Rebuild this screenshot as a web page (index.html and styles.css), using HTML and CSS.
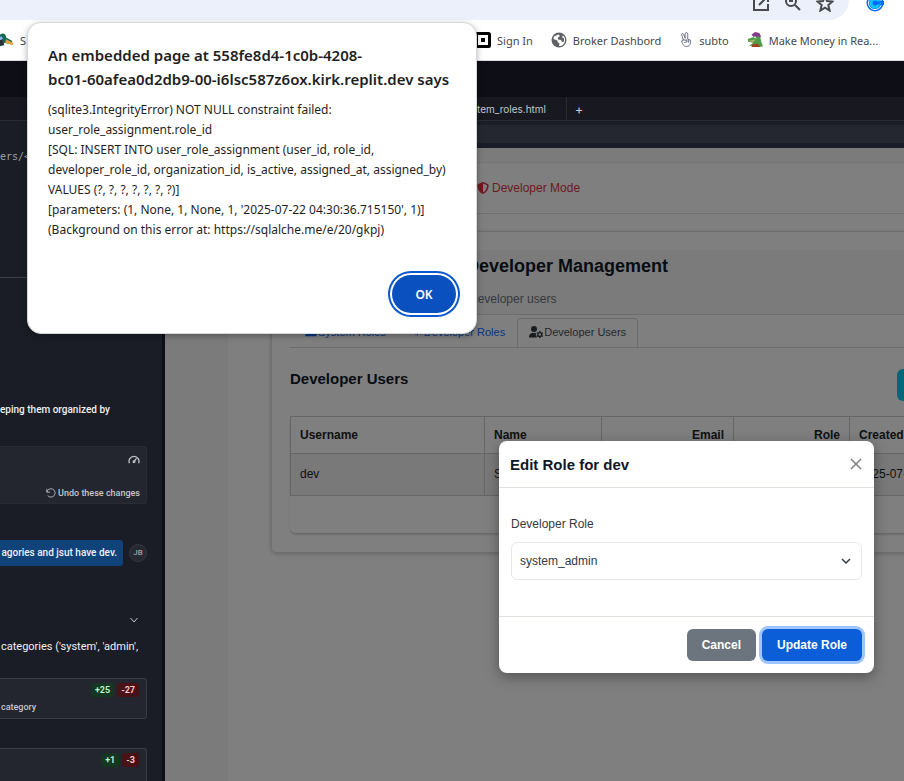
FILE: index.html
```html
<!DOCTYPE html>
<html lang="en">
<head>
<meta charset="utf-8">
<meta name="viewport" content="width=device-width, initial-scale=1">
<title>Developer Management</title>
<link rel="stylesheet" href="styles.css">
</head>
<body>
<header class="browser">
  <div class="omnibar">
    <div class="address">
      <svg viewBox="0 0 18 18" width="18" height="18" fill="none" stroke="#47494d" stroke-width="2"><path d="M8 2H2v14h14v-6M10 2h6v6M16 2 7 11"/></svg>
      <svg viewBox="0 0 18 18" width="18" height="18" fill="none" stroke="#47494d" stroke-width="2"><circle cx="7" cy="7" r="5"/><path d="m11 11 5 5M5 7h4"/></svg>
      <svg viewBox="0 0 18 18" width="18" height="18" fill="none" stroke="#47494d" stroke-width="2"><path d="m9 2 2 5 5.500.5-4.200 3.600 1.300 5.400L9 13.600l-4.600 2.900 1.300-5.400L1.500 7.500 7 7z"/></svg>
    </div>
    <svg class="extension" viewBox="0 0 18 18" width="18" height="18"><circle cx="9" cy="9" r="8.500" fill="#006bff"/><circle cx="9" cy="9" r="6.500" fill="none" stroke="#fff" stroke-width="1"/><path d="M18 7h-5v4h5z" fill="#006bff"/><circle cx="9" cy="9" r="4" fill="none" stroke="#0cc5f5" stroke-width="3"/><path d="M10 7.500h4v3h-4z" fill="#006bff"/></svg>
  </div>
  <nav class="bookmarks">
    <a class="bookmark first" href="#"><svg viewBox="0 0 16 16" width="14" height="16"><path d="M0 2c3-3 7-1 7 3l7 4-1 4-8-2c-1 4-5 4-5 4z" fill="#12694f"/><path d="m7 7 8 4v3L6 11z" fill="#e3a13b"/><path d="M0 5h3v5l2 4H0z" fill="#312b38"/><circle cx="1" cy="6" r="2" fill="#86b6ee"/></svg>S</a>
    <a class="bookmark" href="#"><svg viewBox="0 0 16 16" width="16" height="16"><rect x="1.500" y="1.500" width="13" height="13" rx="1" fill="#fff" stroke="#000" stroke-width="3"/><path d="M6 6h4v4H6z"/></svg>Sign In</a>
    <a class="bookmark" href="#"><svg viewBox="0 0 16 16" width="16" height="16"><circle cx="8" cy="8" r="7.500" fill="#5f6368"/><path d="M3 4.500 7.500 2.500 9 4 7 5.500v2l3 .5 1 2 2-.5v-3l-2-1.500 1-1.500a6 6 0 0 1-4 10.500l.500-2.500-2-1.500V8.500L2.500 7z" fill="#fff"/></svg>Broker Dashbord</a>
    <a class="bookmark" href="#"><svg viewBox="0 0 16 18" width="14" height="18" fill="#fff" stroke="#57617a"><path d="M5 9 3 3c0-2 2-2 2.500 0L7 7V2c0-2 3-2 3 0v6l3 1v4c-1 4-7 5-9 0l-1-3z"/><path d="M4 9h4l1 2-3 1M9 8v3m2-2v3"/></svg>subto</a>
    <a class="bookmark" href="#"><svg viewBox="0 0 18 18" width="16" height="16"><path d="m1 8 6-2 3-3 5 3 1 5 2 5-4 1-6-2-6 1 5-4-6-1z" fill="#4f9d4b"/><path d="m5 3 4-3 5 1 2 5-5-1-3 1z" fill="#843c8b"/><path d="m6 14 6-1 3 4H5z" fill="#a5431d"/><path d="m1 10 7-1 3-2-4 4z" fill="#d9bf68"/><circle cx="9" cy="6" r="1" fill="#fff"/></svg>Make Money in Rea...</a>
  </nav>
</header>
<div class="workspace-head"></div>
<nav class="file-tabs"><a class="file-tab" href="#">tem_roles.html</a><button class="add-tab" aria-label="New tab">+</button></nav>
<div class="workspace">
  <aside class="agent">
    <section class="agent-code"><code>ers/&lt;</code></section>
    <p class="agent-text summary">eping them organized by</p>
    <section class="checkpoint">
      <svg viewBox="0 0 14 12" width="12" height="10" fill="none" stroke="#c2c8cc" stroke-width="1.500"><path d="M1.500 10a6 6 0 1 1 11 0M7 8l3-4"/><circle cx="7" cy="8" r="1"/></svg>
      <button class="undo"><svg viewBox="0 0 12 12" width="10" height="10" fill="none" stroke="#c2c8cc"><path d="M1 1v4h4M1 5a5 5 0 1 1 1 4"/></svg>Undo these changes</button>
    </section>
    <div class="message"><p class="bubble">agories and jsut have dev.</p><span class="avatar">JB</span></div>
    <button class="collapse" aria-label="Collapse"><svg viewBox="0 0 10 10" width="10" height="10" fill="none" stroke="#c2c8cc"><path d="m1.500 3 3.500 4 3.500-4"/></svg></button>
    <p class="agent-text categories">categories ('system', 'admin',</p>
    <section class="change"><div class="counts"><span class="plus">+25</span><span class="minus">-27</span></div><p>category</p></section>
    <section class="change"><div class="counts"><span class="plus">+1</span><span class="minus">-3</span></div></section>
  </aside>
  <div class="divider"></div>
  <section class="webview">
    <div class="toolbar"></div>
    <div class="preview">
      <div class="app">
        <div class="app-top"></div>
        <div class="mode"><svg viewBox="0 0 512 512" width="12" height="12" fill="#dc3545"><path d="M256 0c4.600 0 9.200 1 13.400 2.900L457.700 82.800c22 9.300 38.400 31 38.300 57.200c-.5 99.200-41.300 280.700-213.600 363.200c-16.700 8-36.100 8-52.800 0C57.300 420.700 16.500 239.200 16 140c-.1-26.200 16.300-47.900 38.300-57.200L242.700 2.900C246.800 1 251.400 0 256 0zm0 66.800V444.800C394 378 431.100 230.100 432 141.400L256 66.800z"/></svg>Developer Mode</div>
        <div class="app-body">
          <div class="sidebar"></div>
          <main class="card">
            <div class="card-head"><h1>Developer Management</h1><p>developer users</p></div>
            <div class="card-body">
              <nav class="tabs">
                <a class="tab" href="#"><svg viewBox="0 0 14 12" width="12" height="12" fill="#0d6efd"><circle cx="5" cy="3" r="3"/><path d="M0 11c0-5 9-5 10 0z"/><circle cx="11" cy="8" r="3"/></svg>System Roles</a>
                <a class="tab" href="#"><svg viewBox="0 0 12 12" width="10" height="10" fill="none" stroke="#0d6efd" stroke-width="1.500"><path d="M3 3 1 6l2 3M9 3l2 3-2 3M7 2 5 10"/></svg>Developer Roles</a>
                <a class="tab active" href="#"><svg viewBox="0 0 14 12" width="14" height="12" fill="#343a40"><circle cx="5" cy="3" r="3"/><path d="M0 11.500C0 8 2 7 4 7h3a4 4 0 0 0 1 4.500z"/><circle cx="10.800" cy="8.500" r="1.900" fill="none" stroke="#343a40" stroke-width="1.400"/><path d="M10 5h1.600v1.500H10zM10 10.500h1.600V12H10zM7.300 7l1-.9 1 .9-.8 1zM14.300 7l-1-.9-1 .9.8 1zM7.300 10l1 .9 1-.9-.8-1zM14.300 10l-1 .9-1-.9.8-1z"/></svg>Developer Users</a>
              </nav>
              <div class="section-head"><h2>Developer Users</h2><button class="create" aria-label="Add user"></button></div>
              <div class="table-wrap">
                <table>
                  <colgroup><col class="c-user"><col class="c-name"><col class="c-email"><col class="c-role"><col></colgroup>
                  <thead><tr><th>Username</th><th>Name</th><th class="end">Email</th><th class="end">Role</th><th>Created</th></tr></thead>
                  <tbody><tr><td>dev</td><td>S</td><td></td><td></td><td>2025-07-</td></tr></tbody>
                </table>
              </div>
            </div>
          </main>
        </div>
      </div>
      <div class="backdrop"></div>
    </div>
  </section>
</div>
<form class="modal" role="dialog" aria-labelledby="modal-title">
  <header class="modal-head"><h2 id="modal-title">Edit Role for dev</h2><button class="close" type="button" aria-label="Close"><svg viewBox="0 0 12 12" width="12" height="12" stroke="#7f7f7f" stroke-width="1.500"><path d="m1 1 10 10M11 1 1 11"/></svg></button></header>
  <div class="modal-body">
    <label for="role">Developer Role</label>
    <div class="select"><select id="role"><option>system_admin</option></select><svg viewBox="0 0 10 10" width="10" height="10" fill="none" stroke="#343a40" stroke-width="1.500"><path d="m1 3 4 4 4-4"/></svg></div>
  </div>
  <footer class="modal-foot"><button class="btn" type="button">Cancel</button><button class="btn primary" type="button">Update Role</button></footer>
</form>
<section class="alert" role="alertdialog" aria-labelledby="alert-title">
  <h2 id="alert-title">An embedded page at 558fe8d4-1c0b-4208-<br>bc01-60afea0d2db9-00-i6lsc587z6ox.kirk.replit.dev says</h2>
  <p>(sqlite3.IntegrityError) NOT NULL constraint failed:<br>user_role_assignment.role_id<br>[SQL: INSERT INTO user_role_assignment (user_id, role_id,<br>developer_role_id, organization_id, is_active, assigned_at, assigned_by)<br>VALUES (?, ?, ?, ?, ?, ?, ?)]<br>[parameters: (1, None, 1, None, 1, '2025-07-22 04:30:36.715150', 1)]<br>(Background on this error at: https://sqlalche.me/e/20/gkpj)</p>
  <button class="ok">OK</button>
</section>
</body>
</html>
```
FILE: styles.css
```css
* { box-sizing: border-box; }
body {
  margin: 0;
  height: 100vh;
  display: flex;
  flex-direction: column;
  position: relative;
  overflow: hidden;
  background: #1b1d26;
  font-family: "Liberation Sans", Arial, sans-serif;
  font-size: 12px;
}
h1, h2, p { margin: 0; }
a { color: inherit; text-decoration: none; }
button { border: 0; padding: 0; font: inherit; color: inherit; background: none; }
svg { flex: none; display: block; }

/* Browser bars */
.browser { background: #fff; border-bottom: 1px solid #dcdcdc; }
.omnibar { height: 20px; display: flex; overflow: hidden; }
.address {
  flex: 1;
  display: flex;
  justify-content: flex-end;
  gap: 14px;
  padding-right: 15px;
  background: #ebf0fa;
  border-bottom-right-radius: 20px;
}
.address svg, .extension { margin-top: -6px; }
.extension { margin-left: 17px; margin-right: 20px; }
.bookmarks {
  height: 40px;
  display: flex;
  align-items: center;
  gap: 18px;
  font-family: "Noto Sans", "Open Sans", sans-serif;
  font-size: 11px;
  color: #474747;
  white-space: nowrap;
}
.bookmark { display: flex; align-items: center; gap: 6px; }
.bookmark.first { width: 457px; }

/* Workspace */
.workspace-head { flex: none; height: 36px; background: #0e0f16; }
.file-tabs {
  flex: none;
  height: 24px;
  display: flex;
  padding-left: 477px;
  background: #171820;
  border-bottom: 1px solid #292b36;
  color: #c2c8cc;
  font-family: Inter, sans-serif;
  font-size: 10px;
}
.file-tab { display: flex; align-items: center; width: 90px; border-right: 1px solid #292b36; }
.add-tab { width: 24px; font-size: 13px; }
.workspace { flex: 1; min-height: 0; display: flex; }
.agent {
  flex: none;
  width: 162px;
  padding-right: 15px;
  overflow: hidden;
  color: #eef0f3;
  font-family: Roboto, sans-serif;
  font-size: 10px;
  font-weight: 500;
  line-height: 16px;
  white-space: nowrap;
}
.agent-code {
  height: 157px;
  margin-right: -15px;
  padding-top: 28px;
  border-bottom: 1px solid #3c404b;
  color: #9da2a6;
}
.agent-code code { font: 10px/16px "DejaVu Sans Mono", monospace; }
.summary { margin-top: 124px; }
.checkpoint {
  height: 58px;
  margin-top: 28px;
  padding: 8px 6px 2px;
  display: flex;
  flex-direction: column;
  align-items: flex-end;
  justify-content: space-between;
  background: #24262f;
  border: 1px solid #292b35;
  border-left: 0;
  border-radius: 0 3px 3px 0;
}
.undo { display: flex; align-items: center; gap: 2px; color: #c2c8cc; font-size: 9px; }
.message { display: flex; align-items: center; gap: 6px; margin-top: 36px; }
.bubble { flex: 1; text-align: right; padding: 5px 6px 5px 0; background: #0f4379; border-radius: 0 3px 3px 0; }
.avatar {
  width: 18px;
  height: 18px;
  display: grid;
  place-items: center;
  flex: none;
  border: 1px solid #343741;
  border-radius: 50%;
  background: #272932;
  color: #9da2a6;
  font-size: 8px;
}
.collapse { display: block; margin: 49px 8px 0 auto; }
.categories { margin-top: 14px; padding-left: 1px; font-size: 11px; font-weight: 400; }
.change {
  height: 41px;
  margin: 23px 0 29px;
  padding: 4px 7px 0 1px;
  background: #24262f;
  border: 1px solid #3a3d49;
  border-left: 0;
  border-radius: 0 3px 3px 0;
  color: #c2c8cc;
  font-size: 9px;
}
.change p { margin-top: 2px; }
.counts { display: flex; justify-content: flex-end; gap: 3px; font-weight: 700; line-height: 16px; }
.counts span { padding: 0 4px; border-radius: 3px; line-height: 14px; }
.plus { background: #143622; color: #b5f5c3; }
.minus { background: #481217; color: #ffc5ca; }
.divider { flex: none; width: 3px; background: #0e0f16; }
.webview { flex: 1; min-width: 0; display: flex; flex-direction: column; }
.toolbar { height: 27px; background: #242730; border-top: 4px solid #1b1d26; border-bottom: 5px solid #1a1d27; }

/* Previewed application */
.preview { flex: 1; min-height: 0; position: relative; overflow: hidden; background: #fff; }
.backdrop { position: absolute; inset: 0; background: rgb(0 0 0 / 50%); }
.app { min-width: 1043px; height: 100%; display: flex; flex-direction: column; color: #212529; }
.app-top { height: 15px; background: #f6f6f6; border-bottom: 1px solid #e9e9e9; }
.mode {
  height: 51px;
  display: flex;
  align-items: center;
  gap: 3px;
  padding-left: 312px;
  border-bottom: 1px solid #e1e1e1;
  color: #dc3545;
}
.app-body { flex: 1; display: flex; align-items: flex-start; }
.sidebar { align-self: stretch; width: 63px; background: #f6f6f6; }
.card {
  flex: 1;
  min-width: 0;
  margin: 17px 0 0 43px;
  border: 1px solid #dcdcdc;
  border-radius: 5px;
  box-shadow: 0 1px 4px rgb(0 0 0 / 20%);
}
.card-head {
  height: 65px;
  margin-top: 18px;
  padding: 4px 0 0 194px;
  background: #f7f7f7;
  border-bottom: 1px solid #d8d8d8;
}
.card-head h1 { font-size: 18px; line-height: 24px; color: #111827; }
.card-head p { margin-top: 12px; line-height: 18px; color: #6c757d; padding-left: 5px; }
.card-body { padding: 3px 18px 18px; }
.tabs { height: 30px; display: flex; border-bottom: 1px solid #d8d8d8; font-size: 11px; color: #0d6efd; }
.tab { display: flex; align-items: center; gap: 1px; padding: 0 11px 2px; border: 1px solid transparent; }
.tab:first-child { padding-left: 14px; padding-right: 14px; }
.tab.active { color: #495057; border: 1px solid #d5d5d5; border-bottom: 0; border-radius: 4px 4px 0 0; }
.section-head { height: 68px; display: flex; align-items: center; justify-content: space-between; }
.section-head h2 { font-size: 15px; color: #111827; padding-bottom: 8px; }
.create { width: 292px; height: 32px; margin: 6px 0 0; border-radius: 6px; background: #0dcaf0; }
.table-wrap {
  padding-bottom: 37px;
  border-bottom: 1px solid #d5d5d5;
  border-radius: 6px;
  box-shadow: 0 1px 2px rgb(0 0 0 / 15%);
}
table { width: 100%; table-layout: fixed; border-collapse: collapse; }
th, td { border: 1px solid #cdcdcd; padding: 0 9px; text-align: left; }
th { height: 37px; font-size: 12px; }
td { height: 42px; padding-bottom: 2px; background: #f2f2f2; }
.end { text-align: right; }
.c-user { width: 194px; }
.c-name { width: 117px; }
.c-email { width: 132px; }
.c-role { width: 116px; }

/* Role dialog */
.modal {
  position: absolute;
  left: 499px;
  top: 441px;
  width: 375px;
  background: #fff;
  border-radius: 8px;
  box-shadow: 0 4px 14px rgb(0 0 0 / 35%);
  color: #343a40;
}
.modal-head {
  height: 47px;
  display: flex;
  align-items: center;
  justify-content: space-between;
  padding: 0 12px 0 11px;
  border-bottom: 1px solid #dee2e6;
}
.modal-head h2 { font-size: 15px; color: #111827; }
.modal-body { padding: 26px 12px 36px; }
.modal-body label { display: block; line-height: 20px; }
.select { position: relative; margin-top: 8px; }
.select select {
  appearance: none;
  width: 100%;
  height: 38px;
  padding: 0 8px;
  border: 1px solid #e5e7eb;
  border-radius: 6px;
  background: #fff;
  color: #343a40;
  font: inherit;
}
.select svg { position: absolute; right: 11px; top: 14px; pointer-events: none; }
.modal-foot { display: flex; justify-content: flex-end; gap: 6px; padding: 12px; border-top: 1px solid #dee2e6; }
.btn { height: 32px; padding: 0 15px; border-radius: 6px; background: #6c757d; color: #fff; font-weight: 700; }
.primary { background: #0b5ed7; box-shadow: 0 0 0 3px #9ec5fe; }

/* Browser alert */
.alert {
  position: absolute;
  left: 27px;
  top: 22px;
  width: 450px;
  padding: 20px 17px 17px 20px;
  background: #fff;
  border: 1px solid #d5d7da;
  border-radius: 14px;
  box-shadow: 0 2px 6px rgb(0 0 0 / 30%);
  color: #1f1f1f;
  font-family: "Noto Sans", "Open Sans", sans-serif;
  white-space: nowrap;
}
.alert h2 { font-size: 15px; font-weight: 600; line-height: 24px; }
.alert p { margin-top: 9px; font-size: 12px; line-height: 20px; }
.ok {
  display: block;
  width: 64px;
  height: 38px;
  margin: 35px 3px 3px auto;
  border-radius: 19px;
  background: #0b50bf;
  color: #fff;
  font-weight: 600;
  box-shadow: 0 0 0 2px #fff, 0 0 0 4px #0b57d0;
}
```
